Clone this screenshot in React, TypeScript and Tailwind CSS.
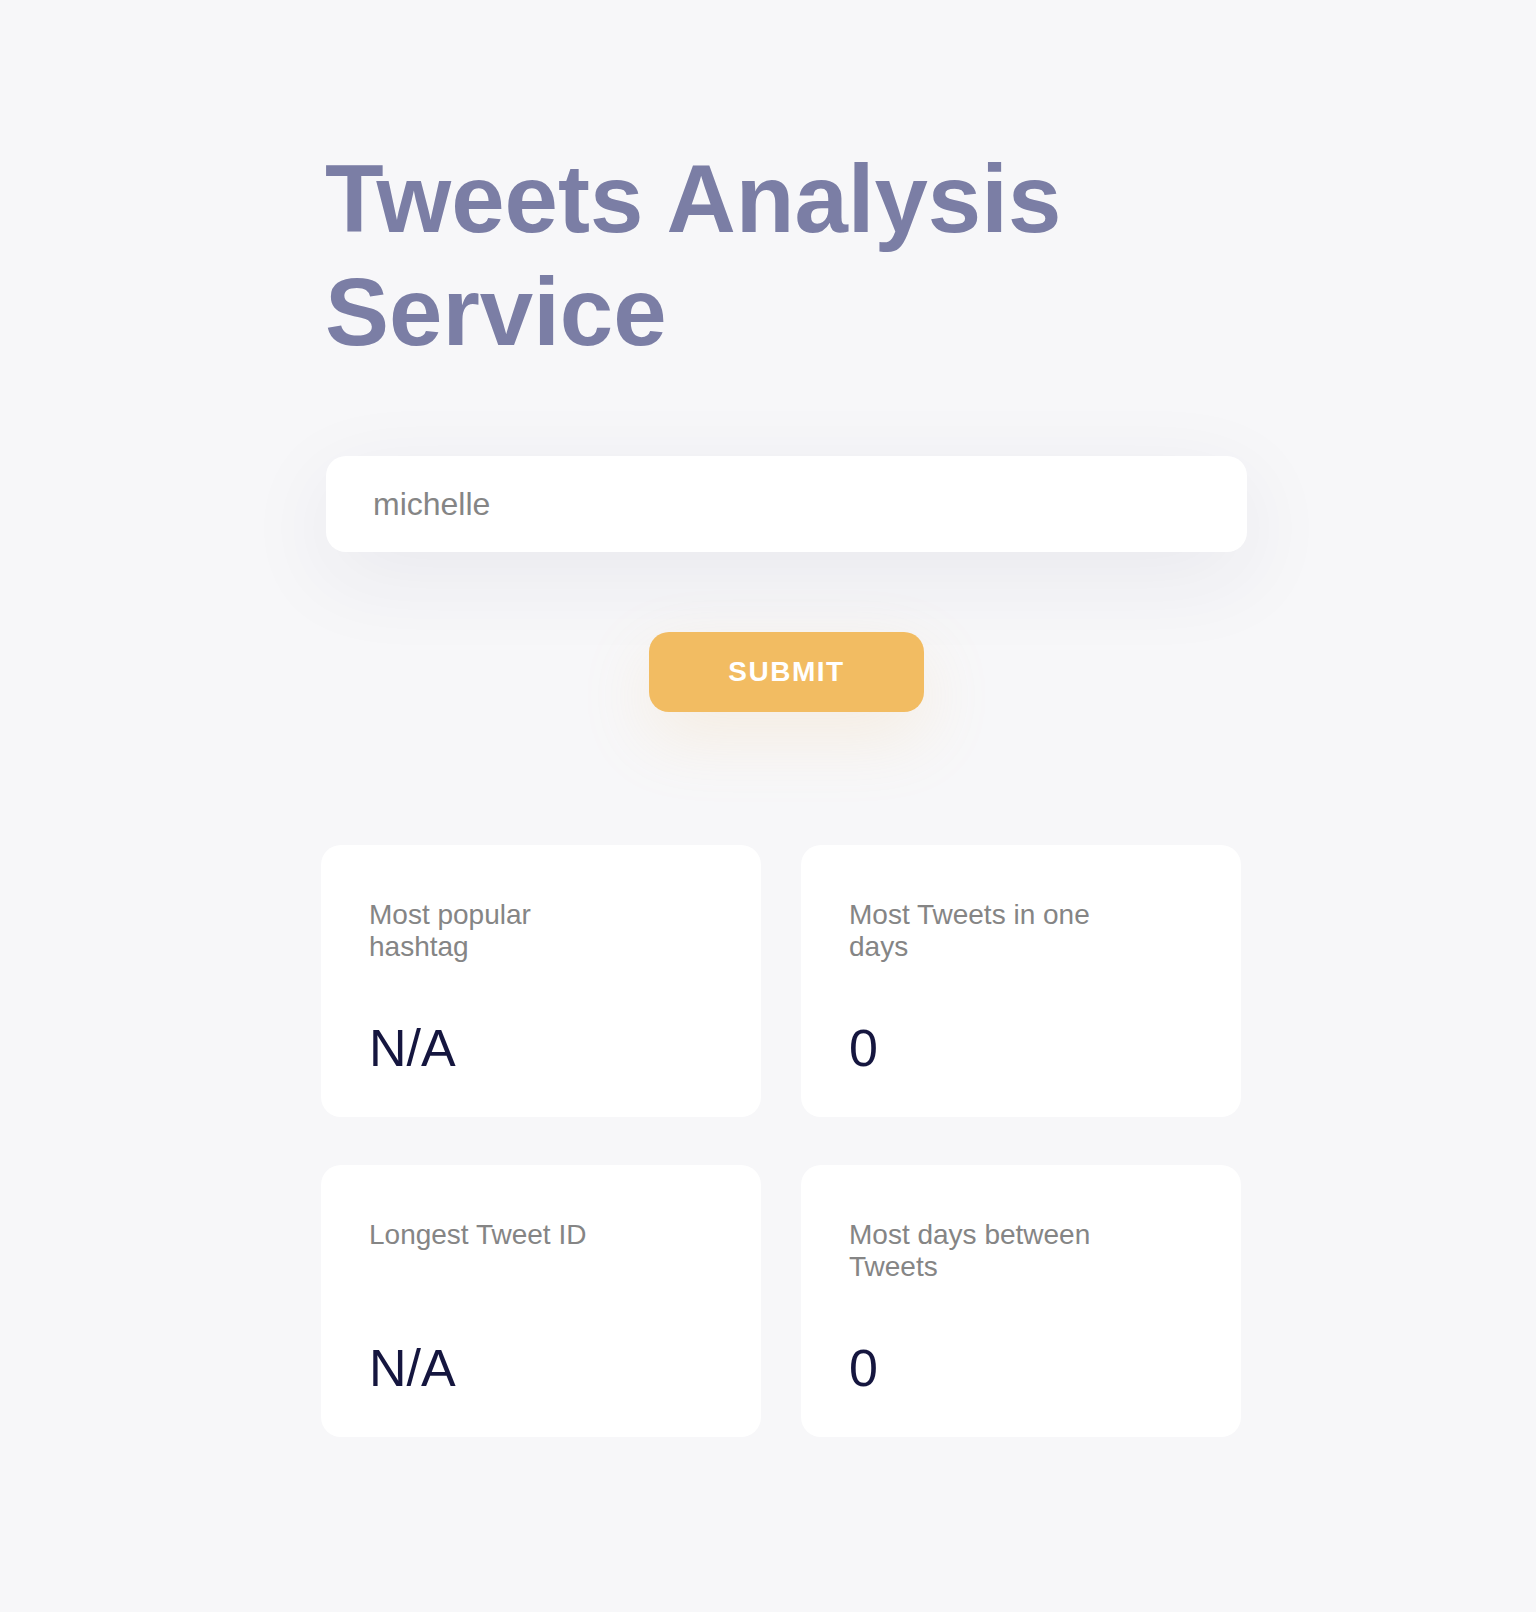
import React from "react";

const stats = [
  { label: "Most popular hashtag", value: "N/A" },
  { label: "Most Tweets in one days", value: "0" },
  { label: "Longest Tweet ID", value: "N/A" },
  { label: "Most days between Tweets", value: "0" },
];

export default function App() {
  return (
    <div
      className="min-h-[1612px] w-full bg-[#f7f7f9]"
      style={{ fontFamily: '"Liberation Sans", Arial, Helvetica, sans-serif' }}
    >
      <div className="ml-[326px] w-[921px] pt-[142px] pb-[100px]">
        <h1 className="text-[96px] leading-[113px] font-bold text-[#7b7ea5] -ml-[1px]">
          Tweets Analysis
          <br />
          Service
        </h1>

        <div className="mt-[88px] h-[96px] rounded-[20px] bg-white shadow-[0_24px_90px_rgba(40,40,90,0.07)] flex items-center pl-[47px]">
          <input
            defaultValue="michelle"
            className="w-full bg-transparent outline-none text-[32px] text-[#858585]"
          />
        </div>

        <div className="mt-[80px] flex justify-center">
          <button className="w-[275px] h-[80px] rounded-[20px] bg-[#f2bc62] text-white text-[28px] font-semibold tracking-[1.5px] shadow-[0_24px_70px_rgba(242,188,98,0.16)]">
            SUBMIT
          </button>
        </div>

        <div className="mt-[133px] -ml-[5px] w-[920px] grid grid-cols-2 gap-x-[40px] gap-y-[48px]">
          {stats.map((s) => (
            <div
              key={s.label}
              className="h-[272px] rounded-[20px] bg-white pl-[48px] pt-[54px]"
            >
              <div className="w-[256px] min-h-[64px] text-[28px] leading-[32px] text-[#858585]">
                {s.label}
              </div>
              <div className="mt-[58px] text-[52px] leading-[54px] text-[#15163f]">
                {s.value}
              </div>
            </div>
          ))}
        </div>
      </div>
    </div>
  );
}
